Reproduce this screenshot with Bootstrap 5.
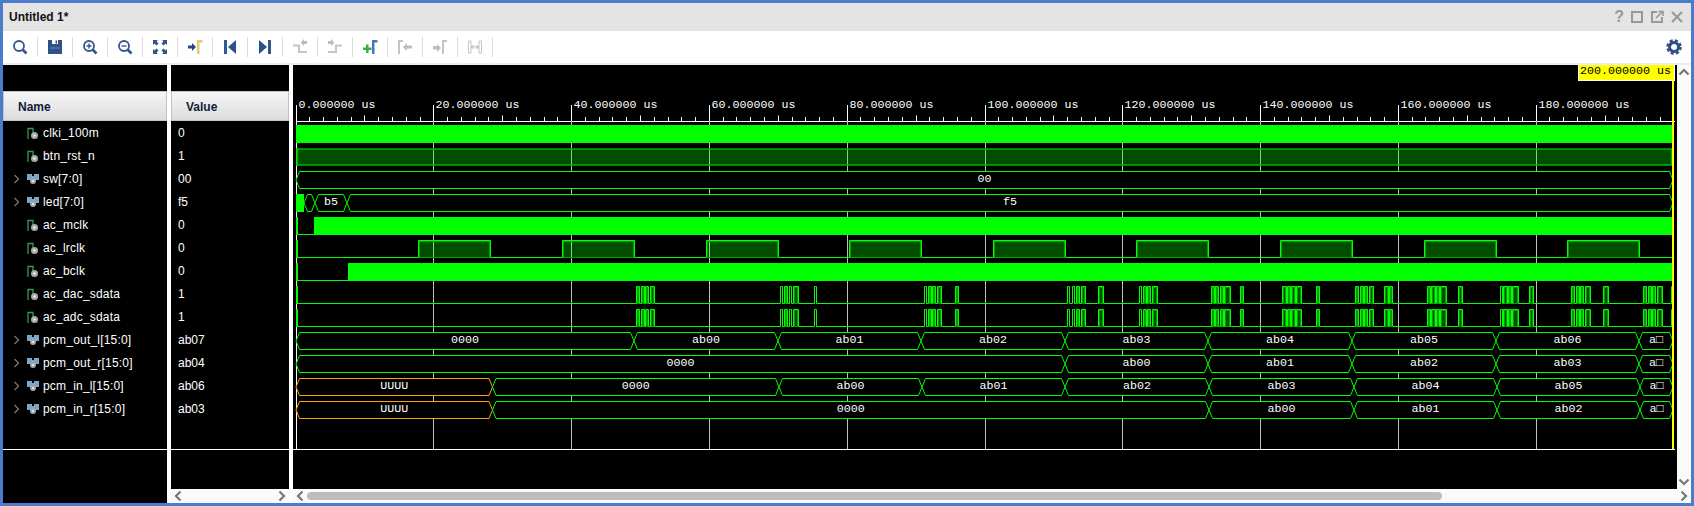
<!DOCTYPE html>
<html lang="en">

<head>
    <meta charset="UTF-8">
    <meta name="viewport" content="width=device-width, initial-scale=1.0">
    <title>Untitled 1*</title>
    <link href="https://cdn.jsdelivr.net/npm/bootstrap@5.3.0/dist/css/bootstrap.min.css" rel="stylesheet">
    <style>
        body { margin: 0; overflow: hidden; background: #4a7ccb; font-family: "Liberation Sans", Arial, sans-serif; font-size: 12px; }
        .wv-frame { width: 1694px; height: 506px; border: 3px solid #4a7ccb; }
        .wv-title { height: 28px; background: #e4e4e4; padding: 0 7px 0 6px; color: #111; font-weight: 700; font-size: 12px; }
        .wv-winbtns { width: 80px; gap: 6px; color: #999; font-size: 16px; }
        .wv-winbtns svg { width: 14px; height: 14px; }
        .wv-tools { height: 34px; background: #fff; border-bottom: 2px solid #eeeeee; }
        .tb-item { width: 34px; height: 32px; }
        .tb-item svg { width: 16px; height: 16px; }
        .tb-sep { width: 1px; height: 20px; background: #dcdcdc; }
        .tb-gear { width: 16px; height: 16px; margin-right: 9px; }
        .wv-main { background: #fff; gap: 4px; min-height: 0; }
        .col-names { width: 164px; }
        .col-values { width: 118px; }
        .col-wave { width: 1398px; }
        .head-gap { height: 26px; background: #000; }
        .head-cell { height: 30px; background: linear-gradient(#f6f6f6, #dcdcdc); border: 1px solid #c4c4c4; font-weight: 700; color: #10203c; padding-top: 2px; }
        .col-names .head-cell { padding-left: 14px; }
        .col-values .head-cell { padding-left: 14px; }
        .sig-list { height: 328px; background: #000; color: #fff; letter-spacing: .2px; }
        .sig-row { height: 23px; white-space: nowrap; }
        .col-names .sig-row { padding-left: 10px; }
        .col-values .sig-row { padding-left: 7px; letter-spacing: 0; }
        .sig-exp { width: 13px; height: 12px; }
        .sig-icon { width: 14px; height: 14px; margin-right: 3px; }
        .sig-foot { border-top: 1px solid #fff; background: #000; }
        .bar-h { height: 14px; background: #fafafa; padding: 0 3px; }
        .bar-v { width: 14px; background: #fafafa; padding: 3px 0; }
        .bar-thumb { height: 8px; background: #bdbdbd; border-radius: 4px; margin-left: 3px; width: 1135px; }
        .wave-svg { display: block; width: 1384px; height: 424px; background: #000; }
        .wave-txt { font-family: "Liberation Mono", "Courier New", monospace; font-size: 11.67px; fill: #fff; }
    </style>
</head>

<body>
    <div class="wv-frame d-flex flex-column">

        <!-- title bar -->
        <div class="wv-title d-flex align-items-center justify-content-between">
            <span>Untitled 1*</span>
            <div class="wv-winbtns d-flex align-items-center justify-content-end">
                <span class="fw-bold">?</span>
                <svg viewBox="0 0 14 14"><rect x="2" y="2" width="10" height="10" fill="none" stroke="#999" stroke-width="2"/></svg>
                <svg viewBox="0 0 14 14"><path d="M7 2H2v10h10V7" fill="none" stroke="#999" stroke-width="2"/><path d="M6 8l6-6M8.500 1.500H13V6" fill="none" stroke="#999" stroke-width="1.600"/></svg>
                <svg viewBox="0 0 14 14"><path d="M2 2l10 10M12 2L2 12" stroke="#999" stroke-width="2.200"/></svg>
            </div>
        </div>

        <!-- toolbar -->
        <div class="wv-tools d-flex align-items-center">
            <div class="tb-item d-flex align-items-center justify-content-center">
                <svg viewBox="0 0 16 16"><circle cx="7" cy="7" r="5" fill="none" stroke="#34568b" stroke-width="1.800"/><path d="M10.500 10.500l4 4" stroke="#34568b" stroke-width="2.600"/></svg>
            </div>
            <div class="tb-sep"></div>
            <div class="tb-item d-flex align-items-center justify-content-center">
                <svg viewBox="0 0 16 16"><path d="M1 1h14v14H1z" fill="#2f5088"/><path d="M5 1h6v4H5z" fill="#fff"/><path d="M8.500 1.500h1.500v3H8.500z" fill="#2f5088"/><path d="M3 8.500h10v1H3z" fill="#6f88b0"/></svg>
            </div>
            <div class="tb-sep"></div>
            <div class="tb-item d-flex align-items-center justify-content-center">
                <svg viewBox="0 0 16 16"><circle cx="7" cy="7" r="5" fill="none" stroke="#34568b" stroke-width="1.800"/><path d="M10.500 10.500l4 4" stroke="#34568b" stroke-width="2.600"/><path d="M4.500 7h5M7 4.500v5" stroke="#34568b" stroke-width="1.400"/></svg>
            </div>
            <div class="tb-sep"></div>
            <div class="tb-item d-flex align-items-center justify-content-center">
                <svg viewBox="0 0 16 16"><circle cx="7" cy="7" r="5" fill="none" stroke="#34568b" stroke-width="1.800"/><path d="M10.500 10.500l4 4" stroke="#34568b" stroke-width="2.600"/><path d="M4.500 7h5" stroke="#34568b" stroke-width="1.400"/></svg>
            </div>
            <div class="tb-sep"></div>
            <div class="tb-item d-flex align-items-center justify-content-center">
                <svg viewBox="0 0 16 16"><path d="M1 1h5L4.500 2.500 6.500 4.500 4.500 6.500 2.500 4.500 1 6zM15 1v5l-1.500-1.500-2 2-2-2 2-2L10 1zM1 15v-5l1.500 1.500 2-2 2 2-2 2L6 15zM15 15h-5l1.500-1.500-2-2 2-2 2 2L15 10z" fill="#2f5088"/></svg>
            </div>
            <div class="tb-sep"></div>
            <div class="tb-item d-flex align-items-center justify-content-center">
                <svg viewBox="0 0 16 16"><path d="M1 6.500h4V4l4 4-4 4V9.500H1z" fill="#24477f"/><path d="M10 15V1h5.500v2.500H12.500V15z" fill="#e6c96e"/></svg>
            </div>
            <div class="tb-sep"></div>
            <div class="tb-item d-flex align-items-center justify-content-center">
                <svg viewBox="0 0 16 16"><path d="M2 1h3v14H2z" fill="#34568b"/><path d="M14 1v14L6 8z" fill="#2f5088"/></svg>
            </div>
            <div class="tb-sep"></div>
            <div class="tb-item d-flex align-items-center justify-content-center">
                <svg viewBox="0 0 16 16"><path d="M11 1h3v14h-3z" fill="#34568b"/><path d="M2 1v14l8-7z" fill="#2f5088"/></svg>
            </div>
            <div class="tb-sep"></div>
            <div class="tb-item d-flex align-items-center justify-content-center">
                <svg viewBox="0 0 16 16"><path d="M1 6.500h6V13h8" fill="none" stroke="#c4c4c4" stroke-width="2"/><path d="M15 2h-3V0L8.500 3.500 12 7V5h3z" fill="#bdbdbd"/></svg>
            </div>
            <div class="tb-sep"></div>
            <div class="tb-item d-flex align-items-center justify-content-center">
                <svg viewBox="0 0 16 16"><path d="M1 13h8V6.500h6" fill="none" stroke="#c4c4c4" stroke-width="2"/><path d="M1 2h3V0l3.500 3.500L4 7V5H1z" fill="#bdbdbd"/></svg>
            </div>
            <div class="tb-sep"></div>
            <div class="tb-item d-flex align-items-center justify-content-center">
                <svg viewBox="0 0 16 16"><path d="M1 8.500h3V5.500h2.500v3h3V11h-3v3H4v-3H1z" fill="#3fae49"/><path d="M10 15V1h5.500v2.500H12.500V15z" fill="#3d7fb5"/></svg>
            </div>
            <div class="tb-sep"></div>
            <div class="tb-item d-flex align-items-center justify-content-center">
                <svg viewBox="0 0 16 16"><path d="M1 15V1h5v2H3v12z" fill="#c4c4c4"/><path d="M15 6.500h-5V4L6 8l4 4V9.500h5z" fill="#bdbdbd"/></svg>
            </div>
            <div class="tb-sep"></div>
            <div class="tb-item d-flex align-items-center justify-content-center">
                <svg viewBox="0 0 16 16"><path d="M1 7h4V5l4 4-4 4v-2.500H1z" fill="#bdbdbd"/><path d="M10 15V1h5v2h-3v12z" fill="#c4c4c4"/></svg>
            </div>
            <div class="tb-sep"></div>
            <div class="tb-item d-flex align-items-center justify-content-center">
                <svg viewBox="0 0 16 16"><path d="M1.500 2h2.500v12H1.500zM12 2h2.500v12H12z" fill="none" stroke="#c4c4c4"/><path d="M4 8h8M6.500 6L4.500 8l2 2M9.500 6l2 2-2 2" fill="none" stroke="#b4b4b4"/></svg>
            </div>
            <div class="tb-sep"></div>
            <svg class="tb-gear ms-auto" viewBox="0 0 16 16"><circle cx="8" cy="8" r="4.500" fill="none" stroke="#2f5088" stroke-width="3"/><circle cx="8" cy="8" r="6.500" fill="none" stroke="#2f5088" stroke-width="2.600" stroke-dasharray="3 2.110"/></svg>
        </div>

        <!-- names, values, wave -->
        <div class="wv-main d-flex flex-grow-1">
            <div class="col-names d-flex flex-column">
                <div class="head-gap"></div>
                <div class="head-cell d-flex align-items-center">Name</div>
                <div class="sig-list" id="sigNames"></div>
                <div class="sig-foot flex-grow-1"></div>
            </div>
            <div class="col-values d-flex flex-column">
                <div class="head-gap"></div>
                <div class="head-cell d-flex align-items-center">Value</div>
                <div class="sig-list" id="sigValues"></div>
                <div class="sig-foot flex-grow-1"></div>
                <div class="bar-h d-flex align-items-center justify-content-between">
                    <svg width="8" height="12" viewBox="0 0 8 12"><path d="M6.500 1.500L2 6l4.500 4.500" fill="none" stroke="#777" stroke-width="2.200"/></svg>
                    <svg width="8" height="12" viewBox="0 0 8 12"><path d="M1.500 1.500L6 6l-4.500 4.500" fill="none" stroke="#777" stroke-width="2.200"/></svg>
                </div>
            </div>
            <div class="col-wave d-flex flex-column">
                <div class="d-flex">
                    <svg class="wave-svg" id="waveSvg" viewBox="293 65 1384 424"></svg>
                    <div class="bar-v d-flex flex-column align-items-center justify-content-between">
                        <svg width="12" height="8" viewBox="0 0 12 8"><path d="M1.500 6.500L6 2l4.500 4.500" fill="none" stroke="#777" stroke-width="2.200"/></svg>
                        <svg width="12" height="8" viewBox="0 0 12 8"><path d="M1.500 1.500L6 6l4.500-4.500" fill="none" stroke="#777" stroke-width="2.200"/></svg>
                    </div>
                </div>
                <div class="bar-h d-flex align-items-center">
                    <svg width="8" height="12" viewBox="0 0 8 12"><path d="M6.500 1.500L2 6l4.500 4.500" fill="none" stroke="#777" stroke-width="2.200"/></svg>
                    <div class="bar-thumb"></div>
                    <svg class="ms-auto" width="8" height="12" viewBox="0 0 8 12"><path d="M1.500 1.500L6 6l-4.500 4.500" fill="none" stroke="#777" stroke-width="2.200"/></svg>
                </div>
            </div>
        </div>
    </div>

    <script src="https://cdn.jsdelivr.net/npm/bootstrap@5.3.0/dist/js/bootstrap.bundle.min.js"></script>

    <script>
        const signals = [
            ["clki_100m", "0", 0], ["btn_rst_n", "1", 0], ["sw[7:0]", "00", 1], ["led[7:0]", "f5", 1],
            ["ac_mclk", "0", 0], ["ac_lrclk", "0", 0], ["ac_bclk", "0", 0], ["ac_dac_sdata", "1", 0],
            ["ac_adc_sdata", "1", 0], ["pcm_out_l[15:0]", "ab07", 1], ["pcm_out_r[15:0]", "ab04", 1],
            ["pcm_in_l[15:0]", "ab06", 1], ["pcm_in_r[15:0]", "ab03", 1]
        ];

        const bitIcon = '<svg class="sig-icon" viewBox="0 0 14 14"><path d="M2 13V2.500h5V7" fill="none" stroke="#2f9e52" stroke-width="1.300"/><circle cx="8.500" cy="9.500" r="3.500" fill="#a8a8a8"/><circle cx="8.500" cy="9.500" r="1.300" fill="#eee"/></svg>';
        const busIcon = '<svg class="sig-icon" viewBox="0 0 14 14"><path d="M1 2h5v2h2V2h5v6H9v1H5V8H1z" fill="#7ba6c8"/><circle cx="7" cy="9" r="3" fill="#a8a8a8"/><circle cx="7" cy="9" r="1.100" fill="#eee"/></svg>';
        const expander = '<svg class="sig-exp" viewBox="0 0 13 12"><path d="M1.500 2l4 4-4 4" fill="none" stroke="#777" stroke-width="1.300"/></svg>';

        document.getElementById("sigNames").innerHTML = signals.map(s =>
            `<div class="sig-row d-flex align-items-center">${s[2] ? expander : '<span class="sig-exp"></span>'}${s[2] ? busIcon : bitIcon}<span>${s[0]}</span></div>`
        ).join("");
        document.getElementById("sigValues").innerHTML = signals.map(s =>
            `<div class="sig-row d-flex align-items-center">${s[1]}</div>`
        ).join("");

        // wave area uses page coordinates through the viewBox
        const X0 = 296, XEND = 1672, PX_US = 6.89;
        const GREEN = "#00ff00", ORANGE = "#ffa500", DIM = "#00a000";
        const top_ = n => 125 + 23 * n;
        const snap = x => Math.floor(x) + 0.5;
        const timeX = us => X0 + us * PX_US;
        let svg = "";

        // ruler + grid
        svg += `<path d="M${X0} 121.500H1675" stroke="#fff"/>`;
        for (let us = 0; us < 200; us += 2) {
            const x = snap(timeX(us));
            if (us % 20 === 0) {
                svg += `<path d="M${x} 105V121" stroke="#fff"/>`;
                svg += `<path d="M${x} 121V449" stroke="${us ? "#c0c0c0" : "#fff"}"/>`;
                svg += `<text class="wave-txt" x="${x + 2}" y="108">${us}.000000 us</text>`;
            } else {
                svg += `<path d="M${x} ${us % 10 === 0 ? 115.500 : 117}V121" stroke="#fff"/>`;
            }
        }

        const edge = n => `<rect x="${X0}" y="${top_(n)}" width="2" height="18" fill="${GREEN}"/>`;
        const solid = (n, a, b) => `<rect x="${a}" y="${top_(n)}" width="${b - a}" height="18" fill="${GREEN}"/>`;

        function lowThenSolid(n, at) {
            return edge(n) + `<path d="M${X0} ${top_(n) + 17.500}H${at}" stroke="${GREEN}"/>` + solid(n, at, XEND);
        }

        // pulse train on a low baseline, wide pulses show the dim fill
        function pulses(n, list) {
            const t = top_(n) + 0.5, b = top_(n) + 17.5;
            let d = `M${X0} ${b}`, out = edge(n);
            list.forEach(p => {
                const r = snap(p[0]), f = snap(p[1]);
                d += `H${r}V${t}H${f}V${b}`;
                out += `<rect x="${r + 1}" y="${t + 1}" width="${Math.max(f - r - 2, 0)}" height="${b - t - 1}" fill="${GREEN}" fill-opacity=".3" stroke="${DIM}"/>`;
            });
            d += `H${XEND}`;
            return out + `<path d="${d}" fill="none" stroke="${GREEN}"/>`;
        }

        function bus(n, segs) {
            const t = top_(n) + 0.5, b = top_(n) + 17.5, m = top_(n) + 9;
            let out = "";
            segs.forEach(s => {
                const d = `M${s[0]} ${m}L${s[0] + 3.5} ${t}H${s[1] - 3.5}L${s[1]} ${m}L${s[1] - 3.5} ${b}H${s[0] + 3.5}Z`;
                out += `<path d="${d}" fill="#000" stroke="${s[3] || GREEN}"/>`;
            });
            segs.forEach(s => {
                if (s[2]) out += `<text class="wave-txt" text-anchor="middle" x="${(s[0] + s[1]) / 2}" y="${top_(n) + 10.5}">${s[2]}</text>`;
            });
            return out;
        }

        // seg list from edges and labels
        function segs(edges, labels, firstColor) {
            return labels.map((l, i) => [edges[i], edges[i + 1], l, i === 0 ? firstColor : null]);
        }

        const lrRise = [418, 562, 706.6, 849, 993, 1136.5, 1280, 1424, 1567.6];
        const sdata = [
            [636, 639.3], [641, 644], [645.3, 648.7], [650, 654.7],
            [780, 782.7], [784.3, 787.7], [789, 791.7], [793.3, 798.7], [814, 816.7],
            [924, 926.7], [928, 931], [932.3, 935.7], [937, 941.7], [955.3, 958],
            [1067, 1069.7], [1072, 1074.7], [1076, 1079], [1081, 1085.7], [1098, 1103.7],
            [1139, 1141.7], [1143, 1146.3], [1147.3, 1150.4], [1152.7, 1157.5],
            [1211.2, 1214.2], [1215.2, 1218.3], [1220.7, 1223.4], [1224.8, 1230.2], [1240.4, 1243.1],
            [1282.9, 1286.3], [1287.6, 1290.3], [1291.7, 1295.4], [1296.8, 1301.5], [1316.8, 1319.6],
            [1355.2, 1358], [1360, 1363], [1364.4, 1367.5], [1369.2, 1373.9], [1384.1, 1388.2], [1389.2, 1392.3],
            [1427.6, 1430.7], [1431.7, 1435], [1436.4, 1439.5], [1440.5, 1446.3], [1458.5, 1462.3],
            [1500, 1502.7], [1503.7, 1507.1], [1508.8, 1511.9], [1512.9, 1518.7], [1529.2, 1533.6],
            [1571.3, 1574.7], [1576.1, 1579.2], [1580.5, 1583.9], [1585.3, 1590], [1603.6, 1608],
            [1643.7, 1646.4], [1648.5, 1651.6], [1652.9, 1655.6], [1657.6, 1662.4], [1671, 1672]
        ];

        svg += solid(0, X0, XEND);
        svg += edge(1) + `<rect x="297.500" y="${top_(1) + 1}" width="${XEND - 298}" height="16" fill="${GREEN}" fill-opacity=".3" stroke="#00b400" stroke-width="1.500"/>`;
        svg += bus(2, [[X0, 1673, "00"]]);
        svg += bus(3, [[304, 315, ""], [315, 347, "b5"], [347, 1673, "f5"]]) + solid(3, X0, 304);
        svg += lowThenSolid(4, 314);
        svg += pulses(5, lrRise.map(r => [r, r + 72]));
        svg += lowThenSolid(6, 348);
        svg += pulses(7, sdata);
        svg += pulses(8, sdata);
        svg += bus(9, segs([X0, 634, 778, 921, 1065, 1208, 1352, 1496, 1639, 1673],
            ["0000", "ab00", "ab01", "ab02", "ab03", "ab04", "ab05", "ab06", "a\u25A1"]));
        svg += bus(10, segs([X0, 1065, 1208, 1352, 1496, 1639, 1673],
            ["0000", "ab00", "ab01", "ab02", "ab03", "a\u25A1"]));
        svg += bus(11, segs([X0, 492.5, 779, 922, 1065, 1209, 1354, 1497, 1640, 1673],
            ["UUUU", "0000", "ab00", "ab01", "ab02", "ab03", "ab04", "ab05", "a\u25A1"], ORANGE));
        svg += bus(12, segs([X0, 492.5, 1209, 1354, 1497, 1640, 1673],
            ["UUUU", "0000", "ab00", "ab01", "ab02", "a\u25A1"], ORANGE));

        // bottom line and cursor
        svg += `<path d="M293 449.500H1675" stroke="#fff"/>`;
        svg += `<rect x="1672" y="81" width="2" height="368" fill="#ffff00"/>`;
        svg += `<rect x="1578.500" y="64.500" width="96" height="16" fill="#ffff00" stroke="#fff"/>`;
        svg += `<text class="wave-txt" style="fill:#000" x="1580" y="74">200.000000 us</text>`;

        document.getElementById("waveSvg").innerHTML = svg;
    </script>

</body>

</html>
